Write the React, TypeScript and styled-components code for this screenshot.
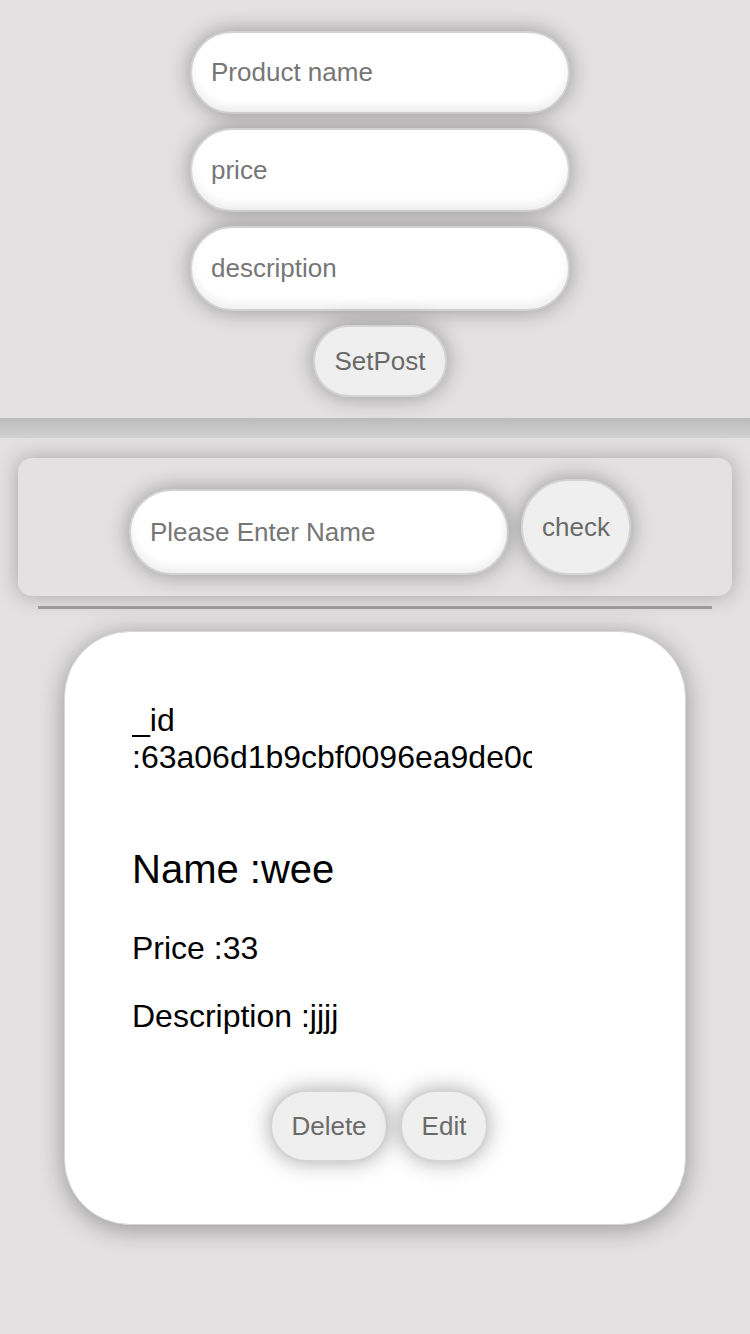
import React, { useState } from 'react';
import styled, { createGlobalStyle } from 'styled-components';

const GlobalStyle = createGlobalStyle`
  html, body {
    margin: 0;
    padding: 0;
    background: #e3e1e2;
    font-family: 'Liberation Sans', Arial, sans-serif;
  }
  #root {
    min-height: 1334px;
    background: #e3e1e2;
  }
`;

const FormSection = styled.form`
  display: flex;
  flex-direction: column;
  align-items: center;
  gap: 14px;
  padding: 31px 0 21px 10px;
  height: 418px;
  box-sizing: border-box;
`;

const ShadowBand = styled.div`
  height: 20px;
  background: linear-gradient(#bcbbbc, #d3d2d3);
`;

const Field = styled.input<{ $width?: number; $height?: number }>`
  box-sizing: border-box;
  width: ${(p) => p.$width ?? 380}px;
  height: ${(p) => p.$height ?? 84}px;
  padding: 0 19px;
  border: 2px solid #d2d2d2;
  border-radius: 45px;
  background: #fff;
  font-family: 'Liberation Sans', Arial, sans-serif;
  font-size: 26px;
  color: #333;
  outline: none;
  box-shadow: 0 0 22px rgba(0, 0, 0, 0.34), inset 0 -6px 8px rgba(0, 0, 0, 0.06);

  &::placeholder {
    font-family: 'Liberation Sans', Arial, sans-serif;
    color: #767676;
  }
`;

const PillButton = styled.button<{ $width: number; $height?: number; $radius?: number }>`
  box-sizing: border-box;
  width: ${(p) => p.$width}px;
  height: ${(p) => p.$height ?? 72}px;
  border: 2px solid #d4d4d4;
  border-radius: ${(p) => p.$radius ?? 36}px;
  background: #efefef;
  color: #6a6a6a;
  font-family: 'Liberation Sans', Arial, sans-serif;
  font-size: 26px;
  padding: 0;
  cursor: pointer;
  box-shadow: 0 0 22px rgba(0, 0, 0, 0.34);
`;

const SearchPanel = styled.div`
  margin: 20px 18px 0;
  height: 138px;
  box-sizing: border-box;
  padding: 0 0 21px 10px;
  display: flex;
  justify-content: center;
  align-items: flex-end;
  gap: 12px;
  border-radius: 14px;
  background: #e3e1e2;
  box-shadow: 0 0 22px rgba(0, 0, 0, 0.28);
`;

const Divider = styled.hr`
  margin: 10px 38px 0;
  height: 3px;
  border: none;
  background: #9a9a9a;
`;

const Card = styled.div`
  width: 622px;
  box-sizing: border-box;
  margin: 22px auto 0;
  padding: 70px 67px 62px;
  background: #fff;
  border-radius: 66px;
  border: 1px solid #d6d6d6;
  box-shadow: 0 4px 26px rgba(0, 0, 0, 0.34);
  display: flex;
  flex-direction: column;
`;

const IdLine = styled.div`
  width: 400px;
  overflow: hidden;
  font-size: 32px;
  color: #000;
`;

const Heading = styled.div<{ $size: number; $top: number }>`
  margin-top: ${(p) => p.$top}px;
  font-size: ${(p) => p.$size}px;
  color: #000;
`;

const Actions = styled.div`
  margin-top: 55px;
  padding-left: 8px;
  display: flex;
  justify-content: center;
  gap: 12px;
`;

const App: React.FC = () => {
  const [search, setSearch] = useState('');

  return (
    <>
      <GlobalStyle />
      <FormSection onSubmit={(e) => e.preventDefault()}>
        <Field placeholder='Product name' />
        <Field placeholder='price' />
        <Field placeholder='description' $height={86} />
        <PillButton type='submit' $width={134}>
          SetPost
        </PillButton>
      </FormSection>
      <ShadowBand />
      <SearchPanel>
        <Field
          placeholder='Please Enter Name'
          $height={86}
          value={search}
          onChange={(e) => setSearch(e.target.value)}
        />
        <PillButton $width={110} $height={96} $radius={48}>
          check
        </PillButton>
      </SearchPanel>
      <Divider />
      <Card>
        <IdLine>_id :63a06d1b9cbf0096ea9de0c4</IdLine>
        <Heading $size={40} $top={71}>Name :wee</Heading>
        <Heading $size={32} $top={38}>Price :33</Heading>
        <Heading $size={32} $top={31}>Description :jjjj</Heading>
        <Actions>
          <PillButton $width={118}>Delete</PillButton>
          <PillButton $width={88}>Edit</PillButton>
        </Actions>
      </Card>
    </>
  );
};

export default App;
